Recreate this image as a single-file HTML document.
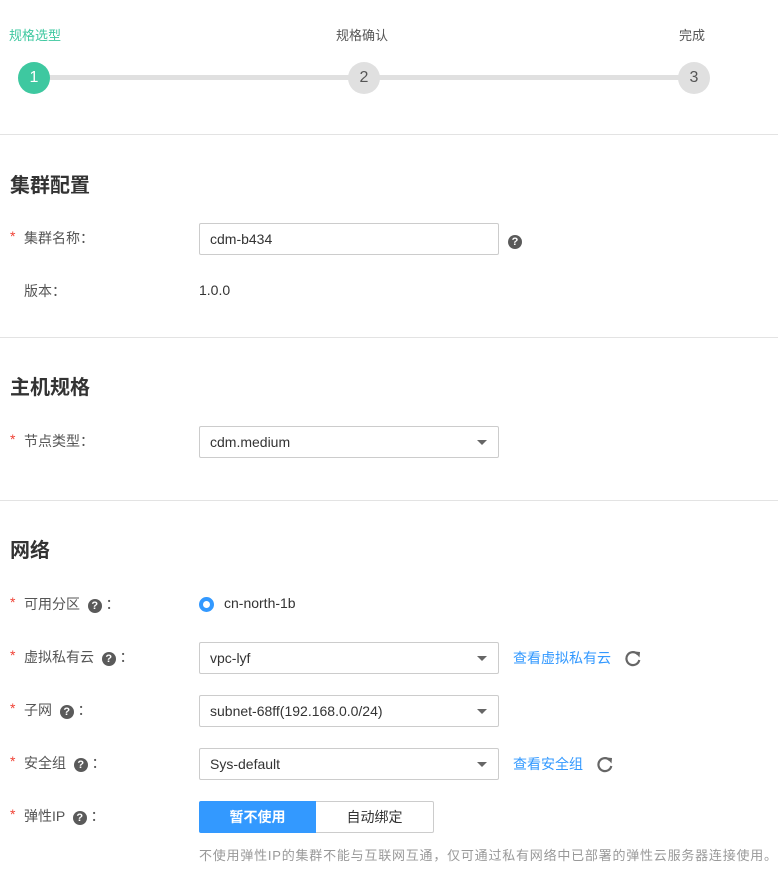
<!DOCTYPE html>
<html><head><meta charset="utf-8"><style>
*{margin:0;padding:0;box-sizing:border-box}
body{width:778px;height:889px;background:#fff;font-family:"Liberation Sans","Noto Sans CJK SC",sans-serif;color:#333;position:relative;overflow:hidden;font-size:14px}
.a{position:absolute;white-space:nowrap}
.hr{position:absolute;left:0;width:778px;height:1px;background:#e3e3e3}
.h{position:absolute;left:10px;font-size:20px;font-weight:bold;color:#333}
.star{color:#f04134;position:absolute;left:10px;font-size:14px}
.lb{position:absolute;left:24px;color:#555;font-size:14px;white-space:nowrap}
.col{display:inline-block;width:14px;text-align:center}
.in{position:absolute;left:199px;width:300px;height:32px;border:1px solid #ccc;border-radius:2px;padding-left:10px;line-height:30px;font-size:14px;color:#333}
.dd::after{content:"";position:absolute;right:11px;top:13px;border-left:5px solid transparent;border-right:5px solid transparent;border-top:5px solid #666}
.q{display:inline-block;width:14px;height:14px;border-radius:50%;background:#5a5a5a;color:#fff;font-size:11px;font-weight:bold;text-align:center;line-height:14px;vertical-align:0}
.c{position:absolute;width:32px;height:32px;border-radius:50%;text-align:center;line-height:32px;font-size:16px}
.lk{color:#3399ff;font-size:14px}
</style></head><body>
<div class="a" style="left:9px;top:25px;color:#3ec8a0;font-size:13px">规格选型</div>
<div class="a" style="left:336px;top:25px;color:#555;font-size:13px">规格确认</div>
<div class="a" style="left:679px;top:25px;color:#555;font-size:13px">完成</div>
<div class="a" style="left:34px;top:75px;width:660px;height:5px;background:#e0e0e0"></div>
<div class="c" style="left:18px;top:62px;background:#3ec8a0;color:#fff">1</div>
<div class="c" style="left:348px;top:62px;background:#e0e0e0;color:#555">2</div>
<div class="c" style="left:678px;top:62px;background:#e0e0e0;color:#555">3</div>
<div class="hr" style="top:134px"></div>
<div class="h" style="top:169px">集群配置</div>
<span class="star" style="top:228px">*</span><span class="lb" style="top:228px">集群名称<span class="col">：</span></span>
<div class="in" style="top:223px">cdm-b434</div>
<div class="a" style="left:508px;top:232px"><span class="q">?</span></div>
<span class="lb" style="top:281px">版本<span class="col">：</span></span>
<div class="a" style="left:199px;top:282px">1.0.0</div>
<div class="hr" style="top:337px"></div>
<div class="h" style="top:371px">主机规格</div>
<span class="star" style="top:431px">*</span><span class="lb" style="top:431px">节点类型<span class="col">：</span></span>
<div class="in dd" style="top:426px">cdm.medium</div>
<div class="hr" style="top:500px"></div>
<div class="h" style="top:534px">网络</div>
<span class="star" style="top:594px">*</span><span class="lb" style="top:594px">可用分区 &nbsp;<span class="q">?</span> <span class="col">：</span></span>
<div class="a" style="left:199px;top:597px;width:15px;height:15px;border-radius:50%;border:4px solid #3399ff"></div>
<div class="a" style="left:224px;top:595px">cn-north-1b</div>
<span class="star" style="top:647px">*</span><span class="lb" style="top:647px">虚拟私有云 &nbsp;<span class="q">?</span> <span class="col">：</span></span>
<div class="in dd" style="top:642px">vpc-lyf</div>
<div class="a lk" style="left:513px;top:648px">查看虚拟私有云</div>
<svg class="a" style="left:624px;top:649px" width="18" height="18" viewBox="0 0 18 18"><path d="M14 5.5A6.5 6.5 0 1 0 15.3 11" fill="none" stroke="#666" stroke-width="2.2"/><path d="M10.5 2.5L16 3 15.5 8.5Z" fill="#666"/></svg>
<span class="star" style="top:700px">*</span><span class="lb" style="top:700px">子网 &nbsp;<span class="q">?</span> <span class="col">：</span></span>
<div class="in dd" style="top:695px">subnet-68ff(192.168.0.0/24)</div>
<span class="star" style="top:753px">*</span><span class="lb" style="top:753px">安全组 &nbsp;<span class="q">?</span> <span class="col">：</span></span>
<div class="in dd" style="top:748px">Sys-default</div>
<div class="a lk" style="left:513px;top:754px">查看安全组</div>
<svg class="a" style="left:596px;top:755px" width="18" height="18" viewBox="0 0 18 18"><path d="M14 5.5A6.5 6.5 0 1 0 15.3 11" fill="none" stroke="#666" stroke-width="2.2"/><path d="M10.5 2.5L16 3 15.5 8.5Z" fill="#666"/></svg>
<span class="star" style="top:806px">*</span><span class="lb" style="top:806px">弹性IP &nbsp;<span class="q">?</span> <span class="col">：</span></span>
<div class="a" style="left:199px;top:801px;width:117px;height:32px;background:#3399ff;color:#fff;font-weight:bold;text-align:center;line-height:32px;border-radius:2px 0 0 2px">暂不使用</div>
<div class="a" style="left:316px;top:801px;width:118px;height:32px;border:1px solid #ccc;border-left:none;color:#333;text-align:center;line-height:30px;border-radius:0 2px 2px 0">自动绑定</div>
<div class="a" style="left:199px;top:845px;color:#999;font-size:13px;letter-spacing:0.78px">不使用弹性IP的集群不能与互联网互通，仅可通过私有网络中已部署的弹性云服务器连接使用。</div>
</body></html>
